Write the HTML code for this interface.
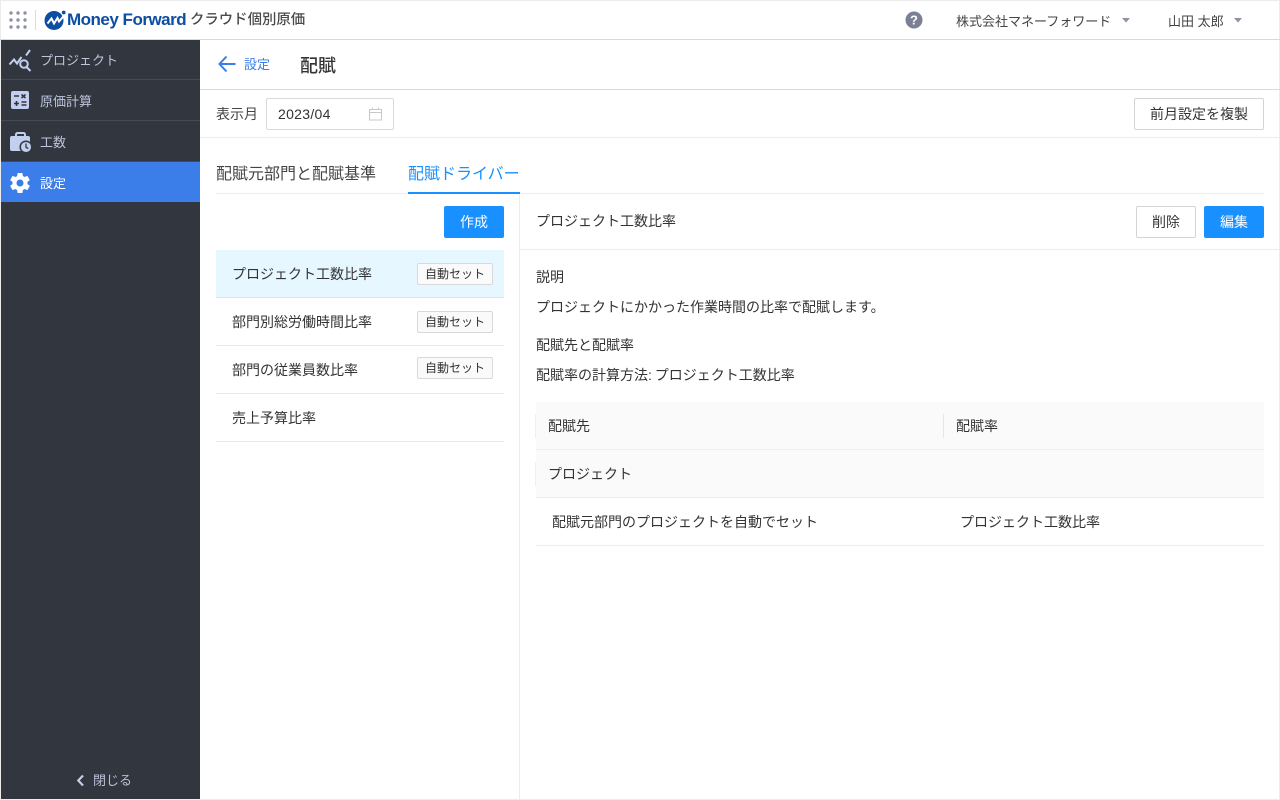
<!DOCTYPE html>
<html lang="ja"><head><meta charset="utf-8"><title>配賦</title>
<style>
*{box-sizing:border-box}
html,body{margin:0;padding:0;width:1280px;height:800px;overflow:hidden;background:#fff}
body{font-family:"Liberation Sans","Noto Sans CJK JP",sans-serif;font-size:14px;color:#333;position:relative}
.a{position:absolute;white-space:nowrap}
.t{line-height:20px;height:20px}
.line{position:absolute;background:#e8e8e8}
.btn{position:absolute;border-radius:2px;text-align:center;font-size:14px;white-space:nowrap}
.white{background:#fff;border:1px solid #d4d4d4;color:#333;line-height:30px;height:32px}
.blue{background:#1890ff;color:#fff;line-height:32px;height:32px}
.nav{position:absolute;left:1px;width:199px;height:40px;color:#bcc5dc;font-size:13px;line-height:42px;padding-left:39px}
.tag{position:absolute;left:417px;width:76px;height:22px;border:1px solid #d9d9d9;background:#fafafa;border-radius:2px;font-size:12px;line-height:20px;text-align:center;color:#333}
</style></head><body>
<!-- outer frame -->
<div class="line" style="left:0;top:0;width:1280px;height:1px;background:#ececec"></div>
<div class="line" style="left:0;top:0;width:1px;height:800px;background:#ececec"></div>
<div class="line" style="left:0;top:799px;width:1280px;height:1px;background:#ececec"></div>
<div class="line" style="left:1279px;top:0;width:1px;height:800px;background:#ececec"></div>

<!-- header -->
<svg class="a" style="left:9px;top:11px" width="18" height="18" viewBox="0 0 18 18" fill="#8d93a3"><circle cx="2" cy="2" r="1.7"/><circle cx="9" cy="2" r="1.7"/><circle cx="16" cy="2" r="1.7"/><circle cx="2" cy="9" r="1.7"/><circle cx="9" cy="9" r="1.7"/><circle cx="16" cy="9" r="1.7"/><circle cx="2" cy="16" r="1.7"/><circle cx="9" cy="16" r="1.7"/><circle cx="16" cy="16" r="1.7"/></svg>
<div class="line" style="left:35px;top:10px;width:1px;height:20px;background:#dcdcdc"></div>
<svg class="a" style="left:44px;top:10px" width="22" height="20" viewBox="0 0 22 20"><circle cx="10" cy="10.500" r="9.500" fill="#0b4ea2"/><path d="M3.500 13.500L7.500 8.500l2.500 5 3.500-5.500 1.500 3.500 6-7" fill="none" stroke="#fff" stroke-width="2"/><circle cx="19.700" cy="2.500" r="1.900" fill="#0b4ea2"/></svg>
<div class="a" style="left:67px;top:9px;font-size:17px;line-height:22px;font-weight:700;color:#0b4ea2;letter-spacing:-.5px">Money Forward</div>
<div class="a" style="left:190px;top:9px;font-size:14.400px;line-height:22px;color:#4a4a4a;font-weight:500">クラウド個別原価</div>
<svg class="a" style="left:905px;top:11px" width="18" height="18" viewBox="0 0 18 18"><circle cx="9" cy="9" r="8.500" fill="#7b8096"/><text x="9" y="13.500" text-anchor="middle" font-size="13" font-weight="700" fill="#fff" font-family="Liberation Sans">?</text></svg>
<div class="a t" style="left:956px;top:12px;font-size:13px;color:#444">株式会社マネーフォワード</div>
<svg class="a" style="left:1121px;top:18px" width="10" height="5"><path d="M1 0h8L5 4.500z" fill="#8d93a3"/></svg>
<div class="a t" style="left:1168px;top:12px;font-size:13px;color:#444">山田 太郎</div>
<svg class="a" style="left:1233px;top:18px" width="10" height="5"><path d="M1 0h8L5 4.500z" fill="#8d93a3"/></svg>
<div class="line" style="left:0;top:39px;width:1280px;height:1px;background:#d9d9d9"></div>

<!-- sidebar -->
<div class="a" style="left:1px;top:40px;width:199px;height:759px;background:#32363e"></div>
<div class="a" style="left:1px;top:79px;width:199px;height:1px;background:#464a54"></div>
<div class="a" style="left:1px;top:120px;width:199px;height:1px;background:#464a54"></div>
<div class="a" style="left:1px;top:161px;width:199px;height:1px;background:#464a54"></div>
<div class="nav" style="top:40px">プロジェクト</div>
<div class="nav" style="top:81px">原価計算</div>
<div class="nav" style="top:122px">工数</div>
<div class="nav" style="top:162px;background:#3b7de9;color:#fff;line-height:43px">設定</div>
<svg class="a" style="left:8px;top:49px" width="24" height="24" viewBox="0 0 24 24" fill="none" stroke="#c3cfee"><path d="M1.500 15.500L6 10.500l3 4 4.500-6.500M18 6.500l4-5.500" stroke-width="2"/><circle cx="16" cy="15" r="3.800" stroke-width="2"/><path d="M18.500 18l4 4" stroke-width="2"/></svg>
<svg class="a" style="left:11px;top:91px" width="18" height="18" viewBox="0 0 18 18"><rect width="18" height="18" rx="2" fill="#c3cfee"/><path d="M3 5h5M3 12.500h5M5.500 10v5M10.500 3.500l4 3.500M14.500 3.500l-4 3.500M10.500 11h5M10.500 14h5" stroke="#32363e" stroke-width="1.600"/></svg>
<svg class="a" style="left:10px;top:131px" width="22" height="23" viewBox="0 0 22 23"><path d="M6 6V3.500A1.500 1.500 0 0 1 7.500 2h6A1.500 1.500 0 0 1 15 3.500V6" fill="none" stroke="#c3cfee" stroke-width="2"/><rect y="5" width="20" height="15" rx="2" fill="#c3cfee"/><circle cx="16" cy="16" r="5.800" fill="#c3cfee" stroke="#32363e" stroke-width="1.500"/><path d="M16 12.500v3.800l2.300 1.200" fill="none" stroke="#32363e" stroke-width="1.300"/></svg>
<svg class="a" style="left:8px;top:170.500px" width="24" height="24" viewBox="0 0 24 24"><path fill="#fff" d="M19.400 13c.04-.33.060-.66.060-1s-.020-.67-.060-1l2.100-1.650c.2-.15.250-.42.120-.64l-2-3.460c-.12-.22-.39-.3-.61-.22l-2.490 1c-.52-.4-1.080-.73-1.690-.98l-.38-2.650A.5.500 0 0 0 14 2h-4a.5.500 0 0 0-.49.420l-.38 2.650c-.61.250-1.170.59-1.690.98l-2.490-1a.5.500 0 0 0-.61.220l-2 3.460c-.13.220-.07.490.12.640L4.560 11c-.04.330-.060.670-.060 1s.020.670.060 1l-2.100 1.650c-.2.150-.25.420-.12.640l2 3.460c.12.220.39.300.61.220l2.490-1c.52.400 1.080.730 1.690.980l.38 2.650c.030.240.240.420.490.420h4c.250 0 .460-.180.490-.420l.38-2.650c.610-.250 1.170-.590 1.690-.980l2.490 1c.230.090.490 0 .610-.220l2-3.460c.120-.220.070-.490-.120-.640zM12 15.500a3.500 3.500 0 1 1 0-7 3.500 3.500 0 0 1 0 7z"/></svg>
<svg class="a" style="left:76px;top:774px" width="9" height="13" viewBox="0 0 9 13"><path d="M7 1.500L2.300 6.500 7 11.500" fill="none" stroke="#c3cfee" stroke-width="2.200"/></svg>
<div class="a t" style="left:93px;top:771px;font-size:13px;color:#b9c1d6">閉じる</div>

<!-- title bar -->
<svg class="a" style="left:218px;top:55px" width="18" height="18" viewBox="0 0 18 18"><path d="M8.500 1.500L1.500 9l7 7.500M2 9h15.500" fill="none" stroke="#3b7de9" stroke-width="2"/></svg>
<div class="a t" style="left:244px;top:55px;font-size:13px;color:#3b7de9">設定</div>
<div class="a" style="left:300px;top:54px;font-size:18px;line-height:24px;color:#333;font-weight:500">配賦</div>
<div class="line" style="left:200px;top:89px;width:1080px;height:1px;background:#d9d9d9"></div>

<!-- filter bar -->
<div class="a t" style="left:216px;top:104px;color:#444">表示月</div>
<div class="a" style="left:266px;top:98px;width:128px;height:32px;border:1px solid #d9d9d9;border-radius:2px;padding-left:11px;line-height:30px;color:#333;letter-spacing:.3px">2023/04</div>
<svg class="a" style="left:369px;top:107px" width="14" height="14" viewBox="0 0 14 14" fill="none" stroke="#c8c8c8"><rect x=".5" y="2.500" width="12" height="10.500"/><path d="M.5 5.500h12M3.500 .500v2M9.500 .500v2"/></svg>
<div class="btn white" style="left:1134px;top:98px;width:130px">前月設定を複製</div>
<div class="line" style="left:200px;top:137px;width:1080px;height:1px;background:#ececec"></div>

<!-- tabs -->
<div class="a" style="left:216px;top:164px;font-size:16px;line-height:22px;color:#444">配賦元部門と配賦基準</div>
<div class="a" style="left:408px;top:164px;font-size:16px;line-height:22px;color:#1890ff">配賦ドライバー</div>
<div class="line" style="left:216px;top:193px;width:1048px;height:1px;background:#ececec"></div>
<div class="a" style="left:408px;top:192px;width:112px;height:2px;background:#1890ff"></div>

<!-- left pane -->
<div class="line" style="left:519px;top:194px;width:1px;height:605px;background:#ececec"></div>
<div class="btn blue" style="left:444px;top:206px;width:60px">作成</div>
<div class="a" style="left:216px;top:250px;width:288px;height:48px;background:#e6f7ff;border-bottom:1px solid #d5e8f2"></div>
<div class="a t" style="left:232px;top:264px">プロジェクト工数比率</div>
<div class="tag" style="top:263px">自動セット</div>
<div class="line" style="left:216px;top:345px;width:288px;height:1px"></div>
<div class="a t" style="left:232px;top:312px">部門別総労働時間比率</div>
<div class="tag" style="top:311px">自動セット</div>
<div class="line" style="left:216px;top:393px;width:288px;height:1px"></div>
<div class="a t" style="left:232px;top:360px">部門の従業員数比率</div>
<div class="tag" style="top:357px">自動セット</div>
<div class="line" style="left:216px;top:441px;width:288px;height:1px"></div>
<div class="a t" style="left:232px;top:408px">売上予算比率</div>

<!-- right pane -->
<div class="a t" style="left:536px;top:211px">プロジェクト工数比率</div>
<div class="btn white" style="left:1136px;top:206px;width:60px">削除</div>
<div class="btn blue" style="left:1204px;top:206px;width:60px">編集</div>
<div class="line" style="left:520px;top:249px;width:760px;height:1px;background:#ececec"></div>
<div class="a t" style="left:536px;top:267px">説明</div>
<div class="a t" style="left:536px;top:297px">プロジェクトにかかった作業時間の比率で配賦します。</div>
<div class="a t" style="left:536px;top:335px">配賦先と配賦率</div>
<div class="a t" style="left:536px;top:365px;word-spacing:-1px">配賦率の計算方法: プロジェクト工数比率</div>

<!-- table -->
<div class="a" style="left:536px;top:402px;width:728px;height:96px;background:#fafafa"></div>
<div class="line" style="left:536px;top:449px;width:728px;height:1px;background:#efefef"></div>
<div class="line" style="left:536px;top:497px;width:728px;height:1px;background:#ececec"></div>
<div class="line" style="left:536px;top:545px;width:728px;height:1px;background:#ececec"></div>
<div class="line" style="left:535px;top:414px;width:1px;height:24px;background:#efefef"></div>
<div class="line" style="left:535px;top:462px;width:1px;height:24px;background:#efefef"></div>
<div class="line" style="left:943px;top:414px;width:1px;height:24px;background:#e6e6e6"></div>
<div class="a t" style="left:548px;top:416px">配賦先</div>
<div class="a t" style="left:956px;top:416px">配賦率</div>
<div class="a t" style="left:548px;top:464px">プロジェクト</div>
<div class="a t" style="left:552px;top:512px">配賦元部門のプロジェクトを自動でセット</div>
<div class="a t" style="left:960px;top:512px">プロジェクト工数比率</div>
</body></html>
